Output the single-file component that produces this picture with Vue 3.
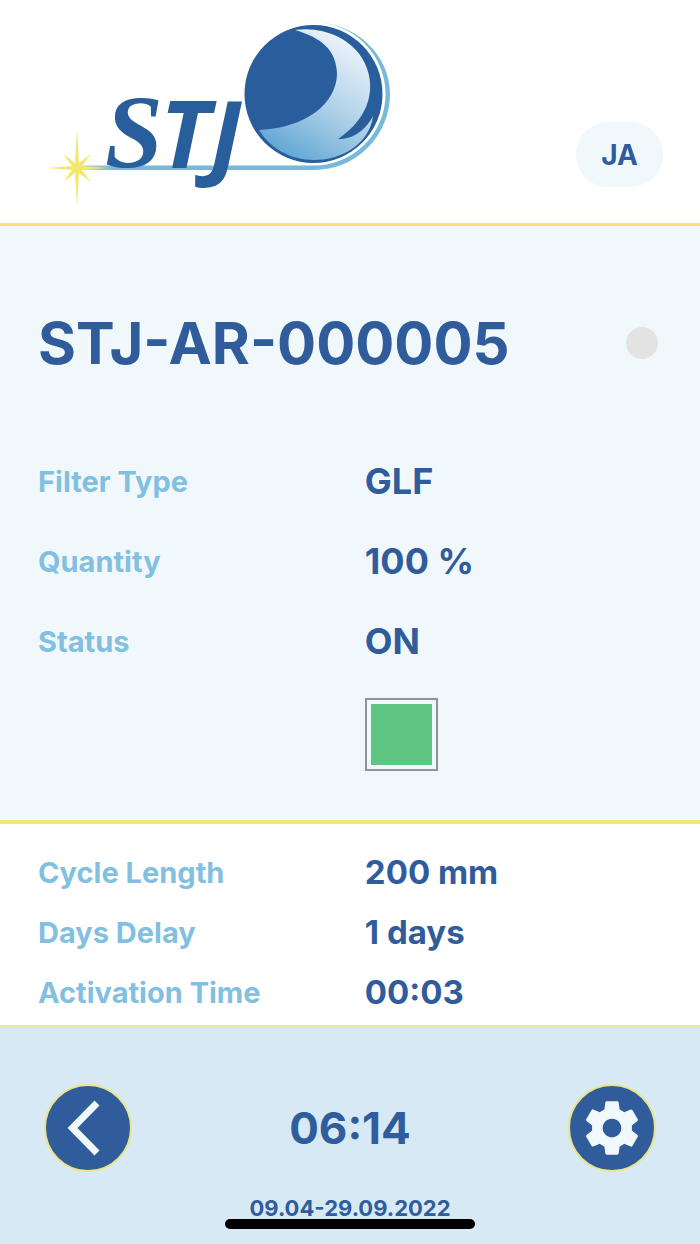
<script setup>
const filterRows = [
  { label: 'Filter Type', value: 'GLF' },
  { label: 'Quantity', value: '100 %' },
  { label: 'Status', value: 'ON' },
]
const cycleRows = [
  { label: 'Cycle Length', value: '200 mm' },
  { label: 'Days Delay', value: '1 days' },
  { label: 'Activation Time', value: '00:03' },
]
</script>

<template>
  <div class="screen">
    <header class="top">
      <svg class="logo" viewBox="48 20 344 190" role="img" aria-label="STJ">
        <defs>
          <linearGradient id="moon" x1="0.2" y1="1" x2="0.75" y2="0">
            <stop offset="0" stop-color="#5ba3d3" />
            <stop offset="0.45" stop-color="#a9cee6" />
            <stop offset="1" stop-color="#f3f7fd" />
          </linearGradient>
          <linearGradient id="trail" x1="0" y1="0" x2="1" y2="0">
            <stop offset="0" stop-color="#b9d9c4" />
            <stop offset="0.1" stop-color="#78b8db" />
          </linearGradient>
        </defs>
        <path fill="url(#trail)" d="M82 165.500H314A71.500 71.500 0 0 0 385.500 94A71.500 71.500 0 0 0 314 22.500A76 72 0 0 1 390 94A76 76 0 0 1 314 170H82Z" />
        <circle cx="313.500" cy="94" r="69" fill="#285e9b" />
        <path fill="url(#moon)" d="M295 30C322 26 350 38 362 58C378 85 371 117 338 139C352 140 366 130 373 116C370 142 344 160 314 160C290 160 270 148 259 130C305 128 337 104 337 73C336 50 322 38 295 30Z" />
        <path fill="#f5e66d" d="M77 129L79 163L91 154L82 166L106 168L82 170L91 182L79 173L77 207L75 173L63 182L72 170L48 168L72 166L63 154L75 163Z" />
        <text class="mark-s" x="105" y="167">S</text>
        <text class="mark" x="160" y="168">T</text>
        <text class="mark" x="210" y="168">J</text>
      </svg>
      <button class="lang" type="button">JA</button>
    </header>

    <main>
      <section class="device">
        <div class="heading">
          <h1>STJ-AR-000005</h1>
          <span class="dot" role="img" aria-label="Disconnected"></span>
        </div>
        <dl class="rows large">
          <div v-for="row in filterRows" :key="row.label" class="row">
            <dt>{{ row.label }}</dt>
            <dd>{{ row.value }}</dd>
          </div>
        </dl>
        <div class="row">
          <div class="swatch" role="img" aria-label="Green"></div>
        </div>
      </section>

      <section class="cycle">
        <dl class="rows">
          <div v-for="row in cycleRows" :key="row.label" class="row">
            <dt>{{ row.label }}</dt>
            <dd>{{ row.value }}</dd>
          </div>
        </dl>
      </section>
    </main>

    <footer class="bottom">
      <div class="controls">
        <button class="round" type="button" aria-label="Back">
          <svg viewBox="0 0 64 64"><path class="chevron" d="M41 7L16.500 32L41 57" /></svg>
        </button>
        <time class="clock">06:14</time>
        <button class="round" type="button" aria-label="Settings">
          <svg viewBox="0 0 24 24"><path d="M19.43 12.98c.04-.32.07-.64.07-.98s-.03-.66-.07-.98l2.11-1.65c.19-.15.24-.42.12-.64l-2-3.46c-.12-.22-.39-.3-.61-.22l-2.49 1c-.52-.4-1.08-.73-1.69-.98l-.38-2.65C14.46 2.18 14.25 2 14 2h-4c-.25 0-.46.18-.49.42l-.38 2.65c-.61.25-1.17.59-1.69.98l-2.49-1c-.23-.09-.49 0-.61.22l-2 3.46c-.13.22-.07.49.12.64l2.11 1.65c-.04.32-.07.65-.07.98s.03.66.07.98l-2.11 1.65c-.19.15-.24.42-.12.64l2 3.46c.12.22.39.3.61.22l2.49-1c.52.4 1.08.73 1.69.98l.38 2.65c.03.24.24.42.49.42h4c.25 0 .46-.18.49-.42l.38-2.65c.61-.25 1.17-.59 1.69-.98l2.49 1c.23.09.49 0 .61-.22l2-3.46c.12-.22.07-.49-.12-.64l-2.11-1.65zM12 15.5c-1.93 0-3.5-1.57-3.5-3.5s1.57-3.5 3.5-3.5 3.5 1.57 3.5 3.5-1.57 3.5-3.5 3.5z" /></svg>
        </button>
      </div>
      <p class="dates">09.04-29.09.2022</p>
      <span class="home-bar"></span>
    </footer>
  </div>
</template>

<style>
body {
  margin: 0;
}
</style>

<style scoped>
.screen {
  display: flex;
  flex-direction: column;
  min-height: 100vh;
  color: #305c9c;
  background: #fff;
  font-family: Inter, "Liberation Sans", sans-serif;
  font-weight: 700;
}
.top {
  display: flex;
  justify-content: space-between;
  align-items: flex-end;
  padding: 20px 37px 13px 48px;
  border-bottom: 3px solid #f4e771;
}
.logo {
  width: 344px;
  height: 190px;
}
.mark,
.mark-s {
  fill: #285e9b;
  font-style: italic;
  font-weight: 700;
}
.mark {
  font-family: "Noto Sans", sans-serif;
  font-size: 94px;
}
.mark-s {
  font-family: "Liberation Serif", serif;
  font-size: 104px;
}
.lang {
  min-width: 87px;
  height: 65px;
  margin-bottom: 23px;
  padding: 0 24px;
  border: 0;
  border-radius: 32px;
  color: inherit;
  background: #f0f8fc;
  font: inherit;
  font-size: 28px;
}
.device {
  padding: 77px 38px 49px;
  border-bottom: 4px solid #f4e771;
  background: #f0f8fc;
}
.heading {
  display: flex;
  justify-content: space-between;
  align-items: center;
  padding-right: 4px;
  margin-bottom: 58px;
}
h1 {
  margin: 0;
  font-size: 58px;
  line-height: 80px;
}
.dot {
  width: 32px;
  height: 32px;
  border-radius: 50%;
  background: #e3e3e3;
}
.rows {
  margin: 0;
}
.row {
  display: grid;
  grid-template-columns: 11fr 10fr;
  align-items: center;
}
dt {
  color: #82bfe1;
  font-size: 29px;
}
dd {
  margin: 0;
  font-size: 33px;
  line-height: 60px;
}
.large dd {
  font-size: 36px;
  line-height: 80px;
}
.swatch {
  grid-column: 2;
  box-sizing: border-box;
  width: 73px;
  height: 73px;
  margin-top: 17px;
  padding: 4px;
  border: 2px solid #8d959b;
  background: #5fc583 content-box;
}
.cycle {
  padding: 18px 38px 3px;
}
.bottom {
  position: relative;
  flex: 1;
  border-top: 2px solid #ebe994;
  background: #d6e9f5;
}
.controls {
  display: flex;
  justify-content: space-between;
  align-items: center;
  padding: 57px 44px 0;
}
.round {
  display: grid;
  place-items: center;
  width: 88px;
  height: 88px;
  padding: 0;
  border: 2px solid #ece483;
  border-radius: 50%;
  background: #305c9c;
}
.round svg {
  width: 64px;
  height: 64px;
  fill: #f0f8fc;
}
.round .chevron {
  fill: none;
  stroke: #f0f8fc;
  stroke-width: 7;
}
.clock {
  font-size: 44px;
}
.dates {
  margin: 22px 0 0;
  font-size: 22px;
  line-height: 28px;
  text-align: center;
}
.home-bar {
  position: absolute;
  bottom: 15px;
  left: 50%;
  width: 250px;
  height: 10px;
  margin-left: -125px;
  border-radius: 5px;
  background: #000;
}
</style>
